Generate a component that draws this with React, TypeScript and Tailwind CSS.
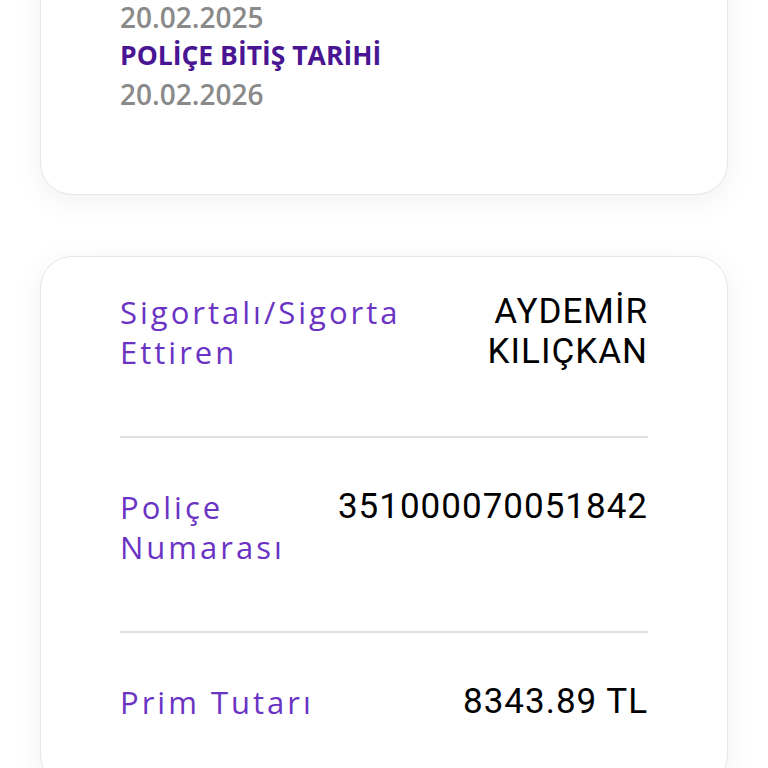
import React from 'react';

const rows = [
  { label: 'Sigortalı/Sigorta Ettiren', value: 'AYDEMİR KILIÇKAN' },
  { label: 'Poliçe Numarası', value: '351000070051842' },
  { label: 'Prim Tutarı', value: '8343.89 TL' },
];

const App: React.FC = () => {
  return (
    <div className="min-h-screen overflow-hidden bg-white px-10" style={{ fontFamily: '"Open Sans", sans-serif' }}>
      {/* Dates card (scrolled partly off the top) */}
      <div className="-mt-[40px] rounded-[32px] border border-[#e6e6e6] bg-white px-[79px] pb-[80px] pt-[39px] shadow-[0_6px_30px_rgba(0,0,0,0.06)]">
        <div className="mb-[2px] text-[28px] font-semibold leading-[34px] text-[#8a8a8a]">20.02.2025</div>
        <div className="text-[26.5px] font-bold leading-[39px] text-[#4a1592]">POLİÇE BİTİŞ TARİHİ</div>
        <div className="text-[28px] font-semibold leading-[39px] text-[#8a8a8a]">20.02.2026</div>
      </div>

      {/* Details card */}
      <div className="mt-[61px] rounded-[32px] border border-[#e6e6e6] bg-white px-[79px] pt-[35px] pb-[64px] shadow-[0_6px_30px_rgba(0,0,0,0.06)]">
        {rows.map((row, i) => (
          <div key={row.label}>
            {i > 0 && <div className="h-[2px] bg-[#e0e0e0]" />}
            <div className={`flex justify-between gap-6 ${i > 0 ? 'pt-[49px]' : ''} ${i < rows.length - 1 ? 'pb-[64px]' : ''}`}>
              <div className="w-[310px] text-[31px] leading-[40px] tracking-[3px] text-[#6a33c4]">{row.label}</div>
              <div
                className="max-w-[330px] text-right text-[35px] leading-[40px] tracking-[1px] text-black"
                style={{ fontFamily: 'Roboto, sans-serif' }}
              >
                {row.value}
              </div>
            </div>
          </div>
        ))}
      </div>
    </div>
  );
};

export default App;
